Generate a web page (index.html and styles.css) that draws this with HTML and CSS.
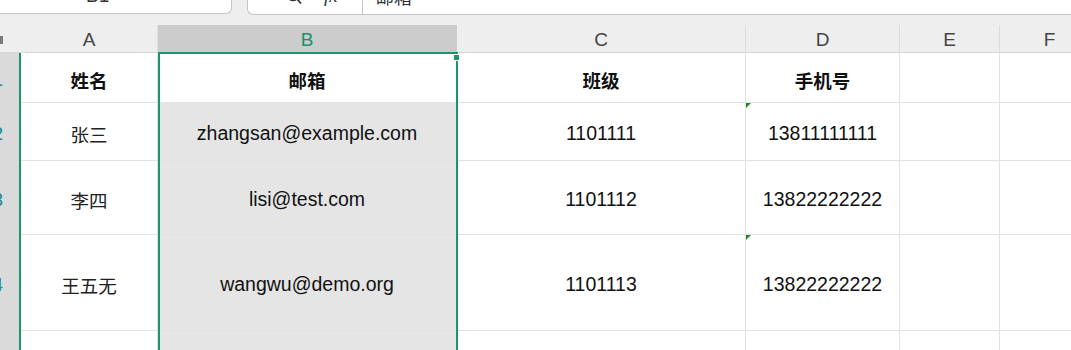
FILE: index.html
```html
<!DOCTYPE html>
<html lang="zh">
<head>
    <meta charset="UTF-8">
    <title>表格</title>
    <link rel="stylesheet" href="styles.css">
</head>
<body>
    <div class="toolbar">
        <div class="name-box"><span class="peek">B1</span></div>
        <div class="formula-bar">
            <span class="peek search">
                <svg width="16" height="20" viewBox="0 0 16 20">
                    <circle cx="7" cy="8" r="5.5" fill="none" stroke="#333" stroke-width="1.6"/>
                    <line x1="11" y1="12" x2="15" y2="16.5" stroke="#333" stroke-width="1.8"/>
                </svg>
            </span>
            <span class="peek fx">fx</span>
            <span class="divider"></span>
            <span class="peek formula-text">邮箱</span>
        </div>
    </div>

    <div class="sheet">
        <!-- column headers -->
        <div class="corner"><span class="corner-mark"></span></div>
        <div class="col-hdr">A</div>
        <div class="col-hdr selected">B</div>
        <div class="col-hdr">C</div>
        <div class="col-hdr">D</div>
        <div class="col-hdr">E</div>
        <div class="col-hdr">F</div>

        <!-- row 1 -->
        <div class="row-hdr"><span>1</span></div>
        <div class="cell head cjk">姓名</div>
        <div class="cell head cjk">邮箱</div>
        <div class="cell head cjk">班级</div>
        <div class="cell head cjk">手机号</div>
        <div class="cell"></div>
        <div class="cell"></div>

        <!-- row 2 -->
        <div class="row-hdr"><span>2</span></div>
        <div class="cell cjk">张三</div>
        <div class="cell in-sel">zhangsan@example.com</div>
        <div class="cell">1101111</div>
        <div class="cell text-num">13811111111</div>
        <div class="cell"></div>
        <div class="cell"></div>

        <!-- row 3 -->
        <div class="row-hdr"><span>3</span></div>
        <div class="cell cjk">李四</div>
        <div class="cell in-sel">lisi@test.com</div>
        <div class="cell">1101112</div>
        <div class="cell">13822222222</div>
        <div class="cell"></div>
        <div class="cell"></div>

        <!-- row 4 -->
        <div class="row-hdr"><span>4</span></div>
        <div class="cell cjk">王五无</div>
        <div class="cell in-sel">wangwu@demo.org</div>
        <div class="cell">1101113</div>
        <div class="cell text-num">13822222222</div>
        <div class="cell"></div>
        <div class="cell"></div>

        <!-- row 5 -->
        <div class="row-hdr"><span>5</span></div>
        <div class="cell"></div>
        <div class="cell in-sel"></div>
        <div class="cell"></div>
        <div class="cell"></div>
        <div class="cell"></div>
        <div class="cell"></div>

        <div class="selection"><span class="fill-handle"></span></div>
    </div>
</body>
</html>
```

FILE: styles.css
```css
body {
    margin: 0;
    background-color: #eeeeee;
    font-family: 'Liberation Sans', Arial, 'Noto Sans CJK SC', sans-serif;
    overflow: hidden;
}

/* top bar: name box + formula bar, scrolled so only the bottom shows */
.toolbar {
    display: flex;
    height: 15px;
    gap: 15px;
}

.name-box,
.formula-bar {
    background-color: #ffffff;
    border-bottom: 1px solid #c4c4c4;
    height: 14px;
    overflow: hidden;
    display: flex;
}

.name-box {
    width: 232px;
    border-right: 1px solid #c4c4c4;
    border-bottom-right-radius: 6px;
    padding-left: 86px;
    box-sizing: border-box;
}

.formula-bar {
    flex: 1;
    border-left: 1px solid #c4c4c4;
    border-bottom-left-radius: 6px;
    padding-left: 38px;
}

.peek {
    font-size: 19px;
    line-height: 20px;
    margin-top: -14px;
    color: #333;
    display: block;
}

.search {
    margin-top: -13px;
    height: 20px;
}

.fx {
    margin-left: 22px;
    font-style: italic;
    font-family: 'Liberation Serif', serif;
}

.divider {
    width: 1px;
    height: 14px;
    background-color: #c8c8c8;
    margin-left: 24px;
}

.formula-text {
    margin-left: 13px;
    font-family: 'Noto Sans CJK SC', sans-serif;
    font-size: 18px;
}

/* grid */
.sheet {
    position: relative;
    margin-top: 10px;
    display: grid;
    grid-template-columns: 21px 137px 299px 289px 154px 100px 100px;
    grid-template-rows: 28px 50px 58px 74px 96px 50px;
}

.corner {
    background-color: #eeeeee;
    border-bottom: 1px solid #d6d6d6;
    position: relative;
}

.corner-mark {
    position: absolute;
    left: 0;
    top: 11px;
    width: 3px;
    height: 8px;
    background-color: #7a7a7a;
}

.col-hdr {
    background-color: #eeeeee;
    border-right: 1px solid #dcdcdc;
    border-bottom: 1px solid #d6d6d6;
    display: flex;
    align-items: center;
    justify-content: center;
    font-size: 19px;
    color: #444;
    padding-top: 2px;
}

.col-hdr.selected {
    background-color: #cccccc;
    color: #14936a;
    border-right-color: #cccccc;
}

.row-hdr {
    background-color: #dadada;
    border-right: 2px solid #19966b;
    display: flex;
    align-items: center;
    justify-content: flex-end;
    padding-right: 16px;
    padding-top: 4px;
    overflow: hidden;
    font-size: 19px;
    color: #1b8c86;
}

.cell {
    position: relative;
    background-color: #ffffff;
    border-right: 1px solid #e2e2e2;
    border-bottom: 1px solid #e2e2e2;
    display: flex;
    align-items: center;
    justify-content: center;
    padding-top: 4px;
    font-size: 19.5px;
    color: #111;
    white-space: nowrap;
}

.cjk {
    font-family: 'Noto Sans CJK SC', sans-serif;
    font-size: 18.5px;
    color: #222;
}

.head {
    font-weight: bold;
    color: #111;
}

.in-sel {
    background-color: #e5e5e5;
}

/* number stored as text marker */
.text-num::before {
    content: '';
    position: absolute;
    left: 0;
    top: 0;
    border-top: 5px solid #1e8a1e;
    border-right: 5px solid transparent;
}

.selection {
    position: absolute;
    left: 158px;
    top: 27px;
    width: 300px;
    bottom: -4px;
    border: 2px solid #19966b;
    box-sizing: border-box;
    pointer-events: none;
}

.fill-handle {
    position: absolute;
    right: -4px;
    top: 0;
    width: 5px;
    height: 5px;
    background-color: #19966b;
    border: 1px solid #ffffff;
}
```
